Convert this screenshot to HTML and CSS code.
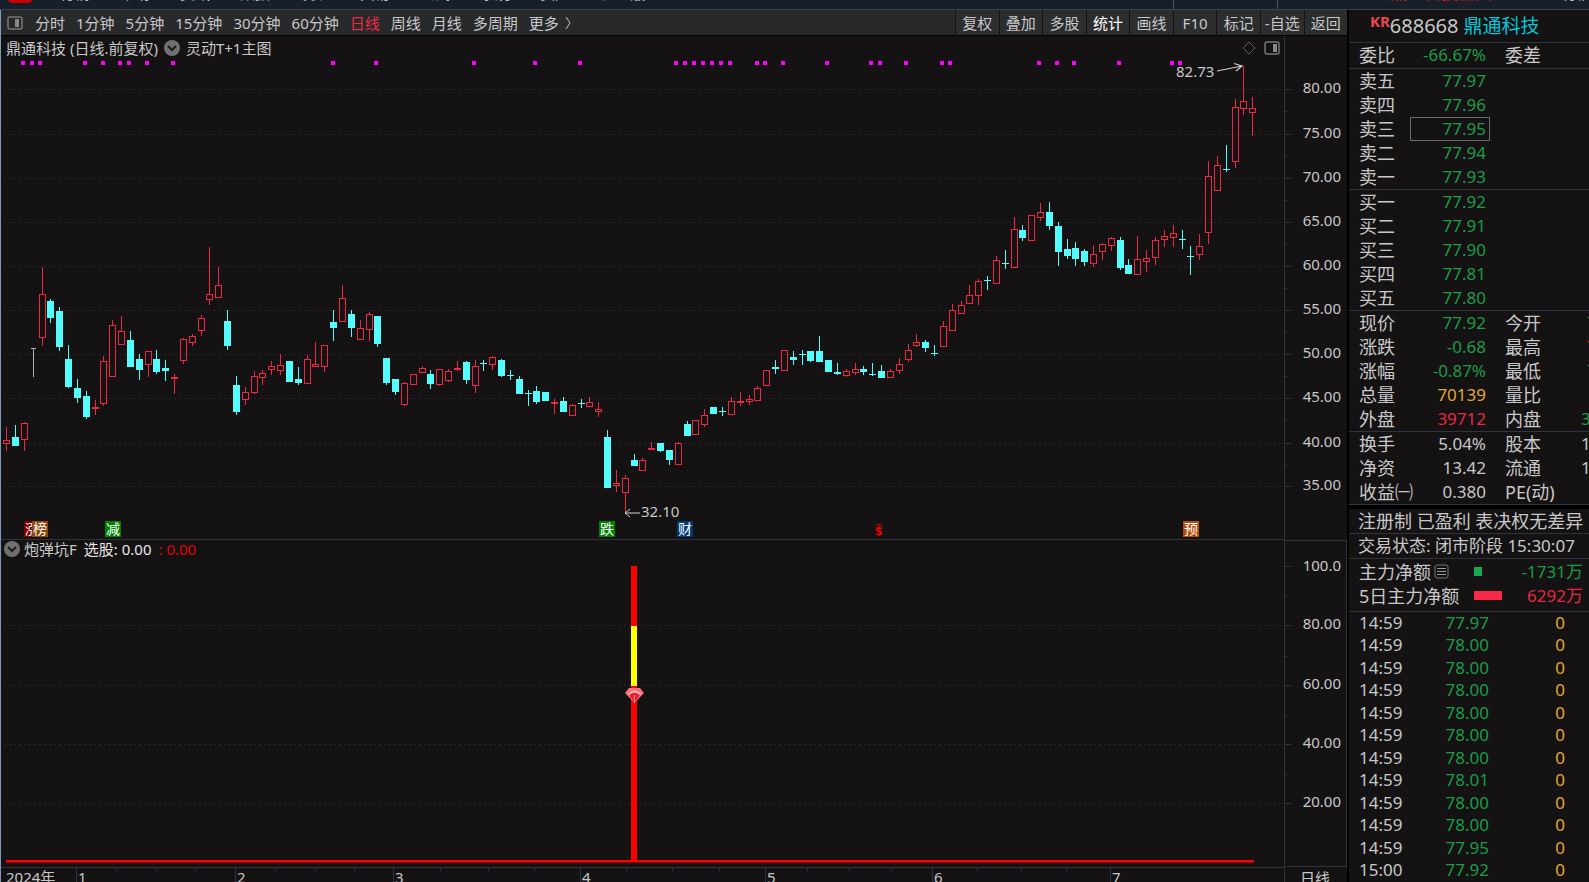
FILE: index.html
```html
<!DOCTYPE html>
<html lang="zh-CN">

<head>
    <meta charset="UTF-8">
    <meta name="viewport" content="width=device-width, initial-scale=1.0">
    <title>鼎通科技 688668</title>
    <link rel="stylesheet" href="styles.css">
</head>

<body>
    <!-- Main menu strip -->
    <div class="menubar">
        <span class="logo"></span>
        <div class="menu">
            <span>行情</span><span>市场</span><span>资讯</span><span>数据</span><span>发现</span>
            <span>交易</span><span>公式</span><span>系统</span><span>资产</span><span>轻量版</span>
        </div>
        <span class="search"></span>
        <span class="notice">鼎通科技主图</span>
        <span class="user">行情</span>
    </div>

    <div class="layout">
        <div class="main">
            <div class="toolbar">
                <div class="periods">
                    <button class="icon-btn" aria-label="侧栏">
                        <svg width="16" height="14" viewBox="0 0 16 14">
                            <rect x="1" y="1" width="14" height="12" rx="2" fill="none" stroke="#777" stroke-width="1.5" />
                            <rect x="8" y="3" width="4" height="8" fill="#888" />
                        </svg>
                    </button>
                    <button>分时</button>
                    <button>1分钟</button>
                    <button>5分钟</button>
                    <button>15分钟</button>
                    <button>30分钟</button>
                    <button>60分钟</button>
                    <button class="active">日线</button>
                    <button>周线</button>
                    <button>月线</button>
                    <button>多周期</button>
                    <button class="more">更多
                        <svg width="8" height="14" viewBox="0 0 8 14">
                            <path d="M2 1l4 6-4 6" fill="none" stroke="#c8c8c8" />
                        </svg>
                    </button>
                </div>
                <div class="actions">
                    <button>复权</button>
                    <button>叠加</button>
                    <button>多股</button>
                    <button class="bright">统计</button>
                    <button>画线</button>
                    <button>F10</button>
                    <button>标记</button>
                    <button>-自选</button>
                    <button>返回</button>
                </div>
            </div>

            <!-- Candlestick chart -->
            <div class="pane">
                <div class="plot">
                    <div class="chart-head">
                        <span>鼎通科技 (日线.前复权)</span>
                        <button class="toggle" aria-label="主图指标">
                            <svg width="16" height="16" viewBox="0 0 16 16">
                                <circle cx="8" cy="8" r="8" fill="#707070" />
                                <path d="M4 6l4 4 4-4" fill="none" stroke="#1c1a1b" stroke-width="2" />
                            </svg>
                        </button>
                        <span>灵动T+1主图</span>
                        <div class="head-icons">
                            <svg width="14" height="14" viewBox="0 0 14 14">
                                <path d="M7 1l6 6-6 6-6-6z" fill="none" stroke="#606060" />
                            </svg>
                            <svg width="16" height="14" viewBox="0 0 16 14">
                                <rect x="1" y="1" width="14" height="12" rx="2" fill="none" stroke="#777" stroke-width="1.5" />
                                <rect x="9" y="3" width="4" height="8" fill="#888" />
                            </svg>
                        </div>
                    </div>
                    <svg id="candles" class="chart" viewBox="1 60 1283 480"></svg>
                </div>
                <svg id="priceAxis" class="axis" viewBox="1284 36 63 504"></svg>
            </div>

            <!-- Indicator chart -->
            <div class="pane">
                <div class="plot">
                    <div class="chart-head sub">
                        <button class="toggle" aria-label="副图指标">
                            <svg width="16" height="16" viewBox="0 0 16 16">
                                <circle cx="8" cy="8" r="8" fill="#707070" />
                                <path d="M4 6l4 4 4-4" fill="none" stroke="#1c1a1b" stroke-width="2" />
                            </svg>
                        </button>
                        <span>炮弹坑F</span>
                        <span class="value">选股: 0.00</span>
                        <span class="red">: 0.00</span>
                    </div>
                    <svg id="indicator" class="chart" viewBox="1 558 1283 310"></svg>
                </div>
                <svg id="indicatorAxis" class="axis" viewBox="1284 540 63 328"></svg>
            </div>

            <div class="pane">
                <div class="plot">
                    <svg id="timeAxis" class="chart" viewBox="1 868 1283 20"></svg>
                </div>
                <div class="axis period">日线</div>
            </div>
        </div>

        <aside class="quote">
            <h1><sup>KR</sup><span>688668</span> <b>鼎通科技</b></h1>

            <table class="grid">
                <tbody class="ratio">
                    <tr><th>委比</th><td class="down">-66.67%</td><th>委差</th><td></td></tr>
                </tbody>
                <tbody>
                    <tr><th>卖五</th><td class="down">77.97</td><th></th><td></td></tr>
                    <tr><th>卖四</th><td class="down">77.96</td><th></th><td></td></tr>
                    <tr><th>卖三</th><td class="down picked">77.95</td><th></th><td></td></tr>
                    <tr><th>卖二</th><td class="down">77.94</td><th></th><td></td></tr>
                    <tr><th>卖一</th><td class="down">77.93</td><th></th><td></td></tr>
                </tbody>
                <tbody>
                    <tr><th>买一</th><td class="down">77.92</td><th></th><td></td></tr>
                    <tr><th>买二</th><td class="down">77.91</td><th></th><td></td></tr>
                    <tr><th>买三</th><td class="down">77.90</td><th></th><td></td></tr>
                    <tr><th>买四</th><td class="down">77.81</td><th></th><td></td></tr>
                    <tr><th>买五</th><td class="down">77.80</td><th></th><td></td></tr>
                </tbody>
                <tbody>
                    <tr><th>现价</th><td class="down">77.92</td><th>今开</th><td class="edge down">7</td></tr>
                    <tr><th>涨跌</th><td class="down">-0.68</td><th>最高</th><td class="edge up">7</td></tr>
                    <tr><th>涨幅</th><td class="down">-0.87%</td><th>最低</th><td class="edge down">7</td></tr>
                    <tr><th>总量</th><td class="amber">70139</td><th>量比</th><td></td></tr>
                    <tr><th>外盘</th><td class="up">39712</td><th>内盘</th><td class="down">3</td></tr>
                </tbody>
                <tbody>
                    <tr><th>换手</th><td>5.04%</td><th>股本</th><td>1</td></tr>
                    <tr><th>净资</th><td>13.42</td><th>流通</th><td>1</td></tr>
                    <tr><th>收益㈠</th><td>0.380</td><th>PE(动)</th><td></td></tr>
                </tbody>
            </table>

            <p class="line first">注册制 已盈利 表决权无差异</p>
            <p class="line">交易状态: 闭市阶段 15:30:07</p>

            <div class="flows">
                <div class="flow">
                    <span class="name">主力净额
                        <svg width="15" height="15" viewBox="0 0 15 15">
                            <rect x="1" y="1" width="13" height="13" rx="2" fill="none" stroke="#777" />
                            <path d="M3 4.500h9M3 7.500h9M3 10.500h9" stroke="#999" />
                        </svg>
                    </span>
                    <span class="bar green"></span>
                    <span class="down amount">-1731万</span>
                </div>
                <div class="flow">
                    <span class="name">5日主力净额</span>
                    <span class="bar"></span>
                    <span class="up amount">6292万</span>
                </div>
            </div>

            <table class="ticks">
                <tr><th>14:59</th><td>77.97</td><td>0</td></tr>
                <tr><th>14:59</th><td>78.00</td><td>0</td></tr>
                <tr><th>14:59</th><td>78.00</td><td>0</td></tr>
                <tr><th>14:59</th><td>78.00</td><td>0</td></tr>
                <tr><th>14:59</th><td>78.00</td><td>0</td></tr>
                <tr><th>14:59</th><td>78.00</td><td>0</td></tr>
                <tr><th>14:59</th><td>78.00</td><td>0</td></tr>
                <tr><th>14:59</th><td>78.01</td><td>0</td></tr>
                <tr><th>14:59</th><td>78.00</td><td>0</td></tr>
                <tr><th>14:59</th><td>78.00</td><td>0</td></tr>
                <tr><th>14:59</th><td>77.95</td><td>0</td></tr>
                <tr><th>15:00</th><td>77.92</td><td>0</td></tr>
            </table>
        </aside>
    </div>

    <script src="script.js"></script>
</body>

</html>
```
FILE: styles.css
```css
* {
    box-sizing: border-box;
}

body {
    margin: 0;
    height: 100vh;
    overflow: hidden;
    background-color: #141213;
    color: #c8c8c8;
    font-family: "Noto Sans", "Noto Sans CJK SC", sans-serif;
    font-size: 15px;
    line-height: 20px;
}

button {
    padding: 0;
    border: none;
    background: none;
    color: inherit;
    font: inherit;
    white-space: nowrap;
    cursor: pointer;
}

svg {
    display: block;
}

/* Menu strip */
.menubar {
    display: flex;
    align-items: flex-end;
    height: 10px;
    padding: 0 4px 6px 8px;
    overflow: hidden;
    background-color: #17202a;
    border-bottom: 1px solid #3a434b;
}

.logo {
    width: 24px;
    height: 24px;
    border-radius: 4px;
    background-color: #c80000;
}

.menu {
    display: flex;
    flex: 1;
    gap: 30px;
    margin-left: 28px;
}

.search {
    width: 105px;
    height: 30px;
    margin-bottom: -6px;
    border: solid #4a525a;
    border-width: 0 1px;
}

.notice {
    width: 164px;
    margin-left: 112px;
    color: #ff1010;
    font-size: 17px;
}

.user {
    width: 31px;
    padding-left: 8px;
    overflow: hidden;
    white-space: nowrap;
}

.layout {
    display: flex;
}

.main {
    flex: 1;
    min-width: 0;
    border-left: 1px solid #7c9cb8;
}

/* Toolbar */
.toolbar {
    display: flex;
    justify-content: space-between;
    height: 26px;
    background-color: #28292b;
    border-bottom: 1px solid #000;
}

.periods {
    display: flex;
    align-items: center;
    gap: 11px;
    padding-left: 6px;
}

.icon-btn {
    margin-right: 1px;
}

.active {
    color: #f02844;
}

.more {
    display: flex;
    align-items: center;
    gap: 5px;
}

.actions {
    display: flex;
    width: 392px;
}

.actions button {
    flex: 1;
    border-left: 1px solid #141415;
    background-color: #2c2d2f;
}

.actions .bright {
    color: #fff;
}

/* Charts */
.pane {
    display: flex;
}

.plot {
    flex: 1;
    min-width: 0;
}

.chart {
    width: 100%;
}

.axis {
    width: 63px;
}

.chart-head {
    display: flex;
    align-items: center;
    height: 24px;
    padding-left: 5px;
}

.chart-head .toggle {
    margin: 0 6px;
}

.chart-head.sub {
    height: 18px;
    padding-left: 3px;
}

.sub .toggle {
    margin: 0 4px 0 0;
}

.value {
    margin: 0 7px;
    color: #e8e8e8;
}

.red {
    color: #e00000;
}

.head-icons {
    display: flex;
    gap: 8px;
    margin-left: auto;
    padding-right: 4px;
}

.period {
    height: 14px;
    padding-left: 15px;
    border-left: 1px solid #2f333d;
    overflow: hidden;
}

text {
    fill: #c8c8c8;
    font-size: 15px;
}

.axis-line {
    stroke: #2f333d;
    shape-rendering: crispEdges;
}

.grid-line {
    stroke: #29292d;
    stroke-dasharray: 2 3;
    shape-rendering: crispEdges;
}

.candle {
    shape-rendering: crispEdges;
}

.candle.r {
    stroke: #ec2844;
    fill: none;
}

.candle.c {
    stroke: #54fcfc;
    fill: #54fcfc;
}

.candle.w {
    stroke: #b0b0b0;
    fill: #b0b0b0;
}

.badge {
    fill: #fff;
    font-size: 14px;
}

.dividend {
    fill: #e80000;
    font-size: 13px;
    font-weight: bold;
}

/* Quote panel */
.quote {
    width: 242px;
    overflow: hidden;
    border-left: 2px solid #000;
    font-size: 17px;
    line-height: 24px;
}

.quote h1 {
    display: flex;
    align-items: center;
    height: 33px;
    margin: 0;
    padding-left: 21px;
    border-bottom: 1px solid #2f333d;
    font-size: 20px;
    font-weight: normal;
}

.quote sup {
    align-self: flex-start;
    color: #f04848;
    font-size: 15px;
    font-weight: bold;
    line-height: 22px;
}

.quote b {
    margin-left: 5px;
    color: #00c8dc;
    font-size: 19px;
    font-weight: normal;
}

.quote table {
    width: 100%;
    border-collapse: collapse;
    table-layout: fixed;
}

.quote th {
    padding: 0;
    font-weight: normal;
    text-align: left;
    white-space: nowrap;
}

.quote td {
    padding: 0;
    text-align: right;
}

.grid tr {
    height: 24px;
}

.grid tbody {
    border-bottom: 1px solid #2f333d;
}

.grid .ratio tr {
    height: 25px;
}

.grid th {
    width: 91px;
    padding-left: 15px;
    font-size: 18px;
}

.grid th:first-child {
    width: 61px;
    padding-left: 10px;
}

.grid td {
    width: 80px;
    padding-right: 4px;
}

.grid td:last-child {
    width: auto;
    padding: 0;
    text-align: left;
}

.grid td.edge {
    padding-left: 6px;
}

.picked {
    box-shadow: inset 0 0 0 1px #6c6c6c;
}

.down {
    color: #1c9c48;
}

.up {
    color: #e42840;
}

.amber {
    color: #e0a838;
}

.line {
    height: 25px;
    margin: 0;
    padding-left: 9px;
    border-bottom: 1px solid #2f333d;
    white-space: nowrap;
}

.line.first {
    height: 29px;
    border-top: 4px solid #000;
    font-size: 18px;
}

.flows {
    padding: 1px 6px 3px 10px;
    border-bottom: 1px solid #2f333d;
}

.flow {
    display: flex;
    align-items: center;
}

.name {
    display: flex;
    align-items: center;
    gap: 3px;
    width: 115px;
    font-size: 18px;
}

.bar {
    width: 28px;
    height: 9px;
    background-color: #fc2848;
}

.bar.green {
    width: 8px;
    background-color: #18a850;
}

.amount {
    margin-left: auto;
}

.ticks {
    height: 270px;
    line-height: 22px;
}

.ticks th {
    width: 70px;
    padding-left: 10px;
}

.ticks td {
    width: 70px;
    color: #1c9c48;
}

.ticks td:last-child {
    width: 100px;
    padding-right: 24px;
    color: #e0a838;
}
```
FILE: script.js
```js
// type, high, body top, body bottom, low
const candles = [
    ['r', 427, 440, 443, 451], ['c', 425, 437, 445, 445], ['r', 422, 423, 439, 451], ['w', 344, 348, 348, 377],
    ['r', 267, 294, 337, 346], ['c', 299, 301, 317, 323], ['c', 307, 311, 346, 351], ['c', 345, 359, 386, 388],
    ['c', 379, 388, 397, 403], ['c', 391, 396, 416, 419], ['r', 400, 407, 408, 415], ['r', 356, 361, 403, 406],
    ['r', 320, 325, 376, 377], ['r', 316, 331, 344, 344], ['c', 331, 340, 366, 366], ['c', 354, 359, 369, 380],
    ['r', 351, 351, 364, 377], ['c', 350, 359, 371, 374], ['c', 360, 368, 370, 381], ['r', 374, 377, 378, 394],
    ['r', 338, 339, 360, 364], ['r', 334, 336, 342, 346], ['r', 315, 318, 330, 336], ['r', 247, 294, 299, 305],
    ['r', 267, 285, 297, 297], ['c', 310, 321, 345, 350], ['c', 376, 385, 411, 415], ['r', 387, 392, 399, 405],
    ['r', 371, 376, 392, 394], ['r', 370, 373, 377, 385], ['r', 361, 366, 369, 375], ['r', 354, 365, 370, 375],
    ['c', 361, 361, 381, 382], ['c', 367, 379, 382, 385], ['r', 355, 359, 383, 383], ['r', 342, 364, 366, 367],
    ['r', 345, 345, 366, 372], ['c', 310, 322, 327, 341], ['r', 285, 298, 321, 321], ['c', 310, 314, 327, 337],
    ['r', 320, 328, 339, 340], ['r', 312, 314, 329, 341], ['c', 316, 316, 343, 347], ['c', 358, 358, 382, 385],
    ['c', 379, 379, 391, 395], ['r', 382, 383, 404, 406], ['r', 374, 374, 384, 384], ['r', 366, 368, 372, 372],
    ['c', 370, 374, 383, 389], ['r', 369, 369, 384, 386], ['r', 369, 371, 380, 382], ['r', 361, 368, 369, 371],
    ['c', 361, 362, 379, 384], ['r', 360, 366, 385, 393], ['c', 360, 363, 363, 371], ['r', 356, 357, 364, 370],
    ['c', 359, 360, 375, 377], ['c', 370, 375, 375, 380], ['c', 376, 379, 393, 394], ['c', 390, 393, 393, 406],
    ['c', 386, 391, 401, 404], ['c', 392, 392, 400, 401], ['r', 399, 402, 403, 414], ['c', 397, 401, 411, 411],
    ['r', 404, 405, 415, 415], ['c', 399, 403, 403, 408], ['r', 397, 402, 406, 406], ['r', 402, 409, 411, 417],
    ['c', 430, 437, 487, 487], ['r', 470, 483, 485, 492], ['r', 475, 478, 492, 512], ['c', 454, 460, 465, 465],
    ['r', 458, 460, 470, 470], ['r', 442, 448, 449, 450], ['c', 443, 443, 450, 452], ['c', 450, 450, 459, 465],
    ['r', 442, 443, 464, 464], ['c', 421, 424, 435, 436], ['r', 420, 420, 434, 435], ['r', 409, 415, 424, 427],
    ['c', 407, 407, 413, 414], ['c', 407, 411, 411, 416], ['r', 397, 401, 414, 414], ['r', 392, 401, 402, 406],
    ['r', 395, 399, 401, 405], ['r', 386, 388, 400, 400], ['r', 370, 370, 385, 385], ['c', 360, 367, 368, 374],
    ['r', 350, 350, 370, 371], ['c', 351, 357, 359, 365], ['c', 350, 354, 354, 365], ['c', 351, 351, 360, 362],
    ['c', 336, 351, 361, 362], ['c', 360, 360, 371, 371], ['c', 363, 372, 373, 375], ['r', 369, 371, 375, 377],
    ['r', 363, 369, 372, 375], ['c', 366, 369, 371, 375], ['c', 363, 374, 374, 376], ['c', 365, 371, 377, 377],
    ['r', 369, 371, 377, 377], ['r', 358, 364, 370, 374], ['r', 344, 350, 359, 362], ['r', 334, 342, 345, 347],
    ['c', 340, 342, 347, 352], ['c', 345, 353, 353, 356], ['r', 321, 326, 346, 346], ['r', 304, 310, 330, 330],
    ['r', 301, 305, 313, 314], ['r', 285, 295, 303, 304], ['r', 279, 281, 295, 305], ['c', 276, 280, 280, 290],
    ['r', 256, 260, 283, 283], ['c', 250, 263, 263, 269], ['r', 217, 229, 267, 267], ['c', 225, 230, 237, 241],
    ['r', 215, 215, 240, 241], ['r', 203, 212, 217, 221], ['c', 202, 212, 225, 230], ['c', 222, 226, 251, 266],
    ['c', 239, 249, 255, 259], ['c', 242, 248, 258, 266], ['c', 249, 251, 261, 266], ['r', 245, 254, 263, 267],
    ['r', 243, 244, 251, 260], ['r', 237, 238, 245, 251], ['c', 237, 240, 267, 270], ['c', 259, 265, 273, 273],
    ['r', 236, 259, 274, 275], ['r', 250, 258, 261, 272], ['r', 237, 240, 257, 265], ['r', 230, 236, 239, 247],
    ['r', 225, 233, 237, 247], ['c', 230, 239, 239, 249], ['c', 246, 256, 256, 275], ['r', 234, 246, 254, 260],
    ['r', 161, 176, 232, 244], ['r', 156, 165, 190, 190], ['c', 145, 169, 169, 172], ['r', 99, 107, 161, 168],
    ['r', 66, 101, 108, 115], ['r', 97, 108, 112, 136]
];

const prices = { 80: 89, 75: 134, 70: 178, 65: 222, 60: 266, 55: 310, 50: 354, 45: 398, 40: 443, 35: 486 };
const levels = { 80: 625, 60: 685, 40: 744, 20: 803 };
const signals = [23, 32, 40, 85, 103, 120, 129, 147, 173, 333, 376, 474, 535, 580, 676, 685, 694, 703, 712, 721,
    730, 757, 765, 783, 827, 871, 880, 906, 942, 950, 1039, 1057, 1074, 1119, 1172, 1180];
const months = { 1: 76, 2: 235, 3: 393, 4: 580, 5: 765, 6: 932, 7: 1110 };
const weeks = [116, 156, 195, 275, 315, 354, 440, 488, 534, 626, 672, 719, 807, 849, 891, 977, 1021, 1066];
const badges = [
    ['涨', 24, '#800000'], ['榜', 32, '#8c480c'], ['减', 105, '#008000'],
    ['跌', 599, '#008000'], ['财', 677, '#003c74'], ['预', 1183, '#b44c08']
];

function line(x1, y1, x2, y2, cls) {
    return `<line x1="${x1}" y1="${y1}" x2="${x2}" y2="${y2}" class="${cls}"/>`;
}

function drawCandle([type, high, top, bottom, low], i) {
    const x = Math.floor(6.7 + i * 8.837) + 0.5;
    let out = `<g class="candle ${type}">`;
    if (type === 'w') {
        out += `<path d="M${x - 2.5} ${top + 0.5}h5M${x} ${top}V${low}"/>`;
    } else if (bottom - top < 1) {
        out += `<path d="M${x - 3.5} ${top + 0.5}h7M${x} ${high}V${low}"/>`;
    } else {
        const fill = bottom - top < 2 && type === 'r' ? ' fill="#ec2844"' : '';
        out += `<path d="M${x} ${high}V${top}M${x} ${bottom}V${low}"/>`;
        out += `<rect x="${x - 3}" y="${top + 0.5}" width="6" height="${bottom - top}"${fill}/>`;
    }
    return out + '</g>';
}

function drawMain() {
    let out = '';
    for (const p in prices) {
        out += line(4, prices[p] + 0.5, 1284, prices[p] + 0.5, 'grid-line');
    }
    out += candles.map(drawCandle).join('');
    signals.forEach(x => {
        out += `<rect x="${x - 2}" y="61" width="4" height="4" fill="#f0f"/>`;
    });
    badges.forEach(([label, x, color]) => {
        out += `<rect x="${x}" y="521" width="16" height="16" fill="${color}"/>`;
        out += `<text x="${x + 1}" y="534" class="badge">${label}</text>`;
    });
    // high and low marks
    out += '<text x="1176" y="77">82.73</text>';
    out += '<path d="M1217 71L1242 66M1234 63.500L1242 66L1236 71" fill="none" stroke="#d0d0d0" stroke-width="1.200"/>';
    out += '<text x="641" y="517">32.10</text>';
    out += '<path d="M640 513H625M630 509L625 513L630 517" fill="none" stroke="#d0d0d0"/>';
    out += '<text x="875" y="536" class="dividend">$</text>';
    out += '<path d="M876 526l3-2 3 2" fill="none" stroke="#e80000"/>';
    out += line(1, 539.5, 1284, 539.5, 'axis-line');
    document.getElementById('candles').innerHTML = out;
}

function drawPriceAxis() {
    let out = line(1284.5, 36, 1284.5, 540, 'axis-line');
    for (const p in prices) {
        const y = prices[p] + 0.5;
        out += line(1284, y, 1291, y, 'axis-line');
        if (p > 35) out += line(1284, y + 22, 1287, y + 22, 'axis-line');
        out += `<text x="1341" y="${prices[p] + 4}" text-anchor="end">${p}.00</text>`;
    }
    document.getElementById('priceAxis').innerHTML = out;
}

function drawIndicator() {
    let out = '';
    for (const l in levels) {
        out += line(4, levels[l] + 0.5, 1284, levels[l] + 0.5, 'grid-line');
    }
    out += '<rect x="631" y="566" width="6" height="296" fill="#f00"/>';
    out += '<rect x="631" y="626" width="6" height="60" fill="#ff0"/>';
    out += '<rect x="6" y="860" width="1248" height="2" fill="#f00"/>';
    out += '<rect x="6" y="862" width="1248" height="1" fill="#900"/>';
    // gem marker
    out += '<path d="M625 693L629 688H640L644 693L634.500 703Z" fill="#f87078"/>';
    out += '<path d="M628 694Q634.500 687 641 694L634.500 702Z" fill="#ffc0c0"/>';
    out += '<path d="M629 695Q634.500 690 640 695L634.500 703Z" fill="#f01c30"/>';
    out += '<path d="M634.500 695V703" stroke="#ff9098"/>';
    out += line(1, 867.5, 1284, 867.5, 'axis-line');
    document.getElementById('indicator').innerHTML = out;
}

function drawIndicatorAxis() {
    let out = '<rect x="1284.500" y="540.500" width="62" height="326" fill="none" class="axis-line"/>';
    out += line(1284, 566.5, 1291, 566.5, 'axis-line');
    out += '<text x="1341" y="571" text-anchor="end">100.0</text>';
    for (const l in levels) {
        const y = levels[l] + 0.5;
        out += line(1284, y, 1291, y, 'axis-line') + line(1284, y - 29, 1287, y - 29, 'axis-line');
        out += `<text x="1341" y="${levels[l] + 4}" text-anchor="end">${l}.00</text>`;
    }
    document.getElementById('indicatorAxis').innerHTML = out;
}

function drawTimeAxis() {
    let out = '<text x="6" y="883">2024年</text>';
    for (const m in months) {
        out += line(months[m] + 0.5, 868, months[m] + 0.5, 888, 'axis-line');
        out += `<text x="${months[m] + 2}" y="883">${m}</text>`;
    }
    weeks.forEach(x => {
        out += line(x + 0.5, 868, x + 0.5, 871, 'axis-line');
    });
    document.getElementById('timeAxis').innerHTML = out;
}

drawMain();
drawPriceAxis();
drawIndicator();
drawIndicatorAxis();
drawTimeAxis();
```
